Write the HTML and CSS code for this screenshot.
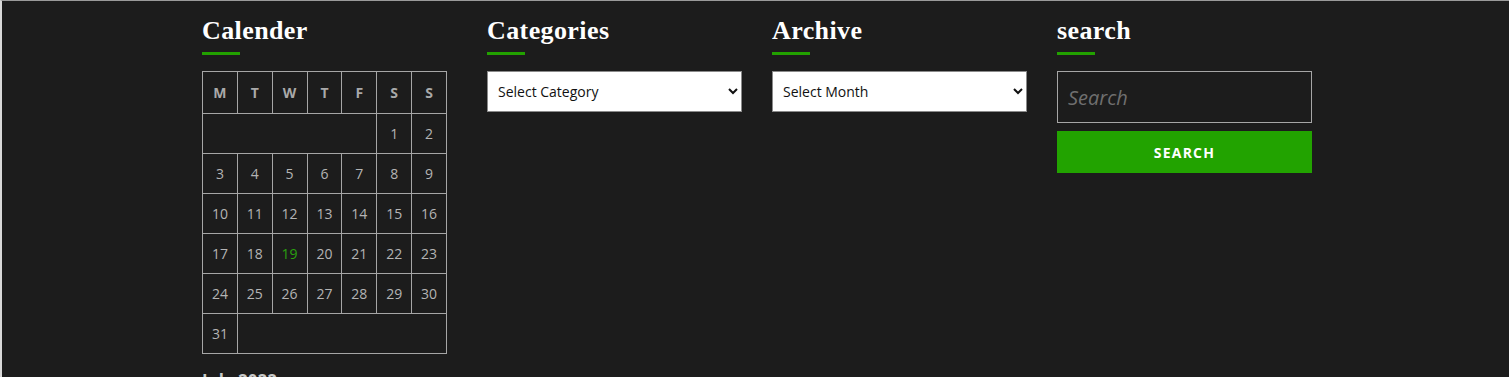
FILE: index.html
```html
<!DOCTYPE html>
<html>
<head>
<meta charset="utf-8">
<link rel="stylesheet" href="styles.css">
</head>
<body>
<div class="page">
  <div class="widgets">
    <section class="widget">
      <h2 class="widget-title">Calender</h2>
      <table class="calendar">
        <thead>
          <tr><th>M</th><th>T</th><th>W</th><th>T</th><th>F</th><th>S</th><th>S</th></tr>
        </thead>
        <tbody>
          <tr><td colspan="5"></td><td>1</td><td>2</td></tr>
          <tr><td>3</td><td>4</td><td>5</td><td>6</td><td>7</td><td>8</td><td>9</td></tr>
          <tr><td>10</td><td>11</td><td>12</td><td>13</td><td>14</td><td>15</td><td>16</td></tr>
          <tr><td>17</td><td>18</td><td class="today">19</td><td>20</td><td>21</td><td>22</td><td>23</td></tr>
          <tr><td>24</td><td>25</td><td>26</td><td>27</td><td>28</td><td>29</td><td>30</td></tr>
          <tr><td>31</td><td colspan="6"></td></tr>
        </tbody>
      </table>
      <div class="cal-caption">July 2022</div>
    </section>
    <section class="widget">
      <h2 class="widget-title">Categories</h2>
      <select class="dropdown"><option>Select Category</option></select>
    </section>
    <section class="widget">
      <h2 class="widget-title">Archive</h2>
      <select class="dropdown"><option>Select Month</option></select>
    </section>
    <section class="widget">
      <h2 class="widget-title">search</h2>
      <form class="search-form">
        <input class="search-field" type="search" placeholder="Search">
        <button class="search-submit" type="button">Search</button>
      </form>
    </section>
  </div>
</div>
</body>
</html>
```

FILE: styles.css
```css
html, body {
  margin: 0;
  padding: 0;
  background: #1c1c1c;
}
.page {
  height: 377px;
  box-sizing: border-box;
  overflow: hidden;
  border-left: 2px solid #d8d8d8;
  border-top: 1px solid #9a9a9a;
  background: #1c1c1c;
  font-family: "Open Sans", "Noto Sans", sans-serif;
}
.widgets {
  display: flex;
  gap: 30px;
  padding-left: 200px;
  padding-top: 14px;
}
.widget {
  width: 255px;
  flex: none;
}
.widget-title {
  margin: 0 0 16px;
  font-family: "Liberation Serif", "DejaVu Serif", serif;
  font-weight: bold;
  font-size: 26px;
  letter-spacing: 0.4px;
  line-height: 32px;
  color: #ffffff;
  padding-bottom: 8px;
  position: relative;
}
.widget-title::after {
  content: "";
  position: absolute;
  left: 0;
  bottom: 0;
  width: 38px;
  height: 3px;
  background: #22a100;
}
.calendar {
  border-collapse: collapse;
  width: 245px;
  table-layout: fixed;
  color: #b4b4b4;
  font-size: 14px;
}
.calendar th, .calendar td {
  border: 1px solid #a6a6a6;
  text-align: center;
  padding: 0;
}
.calendar th {
  height: 41px;
  font-weight: 700;
  font-size: 14px;
  color: #a9a9a9;
}
.calendar td {
  height: 39px;
}
.calendar td.today {
  color: #2aa10f;
}
.cal-caption {
  margin-top: 15px;
  font-weight: 700;
  font-size: 17px;
  color: #c8c8c8;
}
.dropdown {
  display: block;
  width: 255px;
  height: 41px;
  box-sizing: border-box;
  border: 1px solid #8a8a8a;
  background: #ffffff;
  color: #111;
  font-family: "Open Sans", "Noto Sans", sans-serif;
  font-size: 14px;
  padding: 0 6px;
  border-radius: 0;
}
.search-form {
  display: flex;
  flex-direction: column;
  gap: 8px;
}
.search-field {
  width: 255px;
  height: 52px;
  box-sizing: border-box;
  border: 1px solid #a6a6a6;
  background: transparent;
  color: #ddd;
  padding: 0 10px;
  font-family: "Open Sans", "Noto Sans", sans-serif;
  font-size: 20px;
  font-style: italic;
  outline: none;
  border-radius: 0;
}
.search-field::placeholder {
  color: #6f6f6f;
  font-style: italic;
}
.search-submit {
  width: 255px;
  height: 42px;
  border: none;
  background: #22a300;
  color: #ffffff;
  font-family: "Open Sans", "Noto Sans", sans-serif;
  font-weight: 700;
  font-size: 14px;
  letter-spacing: 1.2px;
  text-transform: uppercase;
  border-radius: 0;
}
```
